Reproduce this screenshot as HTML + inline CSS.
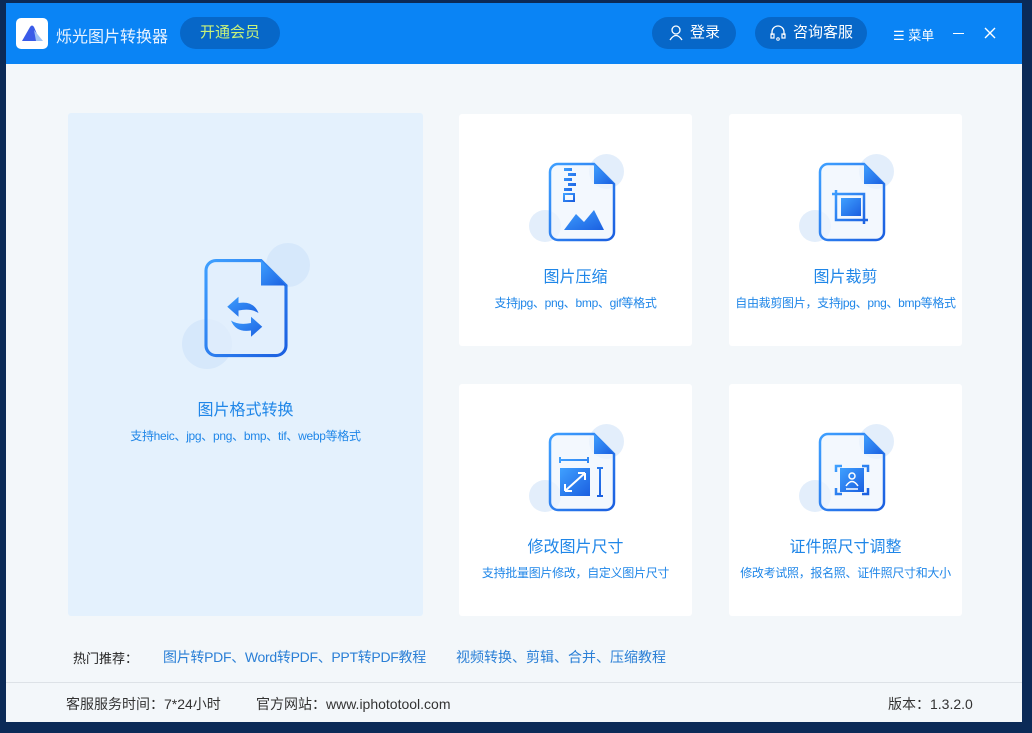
<!DOCTYPE html>
<html><head><meta charset="utf-8"><style>
*{margin:0;padding:0;box-sizing:border-box}
body{width:1032px;height:733px;overflow:hidden;background:#0b2a57;font-family:"Liberation Sans","Noto Sans CJK SC",sans-serif;position:relative}
.win{position:absolute;left:6px;top:3px;width:1016px;height:719px;background:#f3f7fa}
.bar{position:absolute;left:0;top:0;width:1016px;height:61px;background:#0a84f5}
.t{position:absolute;white-space:nowrap}
.pill{position:absolute;background-color:#0767c8;border-radius:16px;color:#fff;font-size:15px;height:32px;line-height:32px;display:flex;align-items:center;justify-content:center;gap:6px}
.card{position:absolute;background:#fff;border-radius:3px}
.card .ti{position:absolute;left:0;right:0;text-align:center;font-size:16px;color:#1f86e8}
.card .su{position:absolute;left:0;right:0;text-align:center;font-size:12px;color:#1f86e8;letter-spacing:-0.3px}
.circ{position:absolute;border-radius:50%;background:#e3eefb}
</style></head><body>
<div class="win">
<div class="bar">
 <div style="position:absolute;left:10px;top:15px;width:32px;height:31px;background:#fff;border-radius:5px">
  <svg width="32" height="31" viewBox="0 0 32 31"><path d="M6 23 L14 9 Q16 6 18 9 L24 23 Z" fill="#3a5be8"/><path d="M18 12 L27 23 H20 Z" fill="#9fc2f5"/></svg>
 </div>
 <div class="t" style="left:50px;top:20px;color:#eaf3ff;font-size:16px">烁光图片转换器</div>
 <div class="pill" style="left:174px;top:14px;width:100px;color:#c8f27a">开通会员</div>
 <div class="pill" style="left:646px;top:14px;width:84px">
  <svg width="16" height="16" viewBox="0 0 16 16"><circle cx="8" cy="5" r="4" fill="none" stroke="#fff" stroke-width="1.3"/><path d="M2 15 Q8 6 14 15" fill="none" stroke="#fff" stroke-width="1.3"/></svg>
  <span>登录</span></div>
 <div class="pill" style="left:749px;top:14px;width:112px">
  <svg width="18" height="18" viewBox="0 0 18 18"><path d="M3 11 V8 a6 6 0 0 1 12 0 V11" fill="none" stroke="#fff" stroke-width="1.3"/><rect x="2" y="10" width="3" height="4" fill="none" stroke="#fff" stroke-width="1.2"/><rect x="13" y="10" width="3" height="4" fill="none" stroke="#fff" stroke-width="1.2"/><circle cx="9" cy="15" r="1.3" fill="none" stroke="#fff"/></svg>
  <span>咨询客服</span></div>
 <div class="t" style="left:887px;top:22px;color:#fff;font-size:13px">☰ 菜单</div>
 <div style="position:absolute;left:947px;top:30px;width:11px;height:1px;background:#fff"></div>
 <svg width="12" height="12" style="position:absolute;left:978px;top:24px"><path d="M1 1 L11 11 M11 1 L1 11" stroke="#fff" stroke-width="1.4"/></svg>
</div>

<div class="card" style="left:62px;top:110px;width:355px;height:503px;background:#e4f1fd">
 <div class="circ" style="left:198px;top:130px;width:44px;height:44px;background:#d6e8fb"></div>
 <div class="circ" style="left:114px;top:206px;width:50px;height:50px;background:#d6e8fb"></div>
 <svg width="92" height="100" viewBox="0 0 68 80" style="position:absolute;left:132px;top:145px">
  <defs><linearGradient id="g" x1="0" y1="0" x2="1" y2="1"><stop offset="0" stop-color="#3fa0ff"/><stop offset="1" stop-color="#1b5fe0"/></linearGradient></defs>
  <path d="M10 2 H46 L66 22 V70 a8 8 0 0 1 -8 8 H10 a8 8 0 0 1 -8 -8 V10 a8 8 0 0 1 8 -8 Z" fill="#e1eefc" fill-opacity=".7" stroke="url(#g)" stroke-width="2.5"/>
  <path d="M46 2 V22 H66 Z" fill="url(#g)"/>
  <path d="M44 44 Q40 34 28 36 V31 L19 39 L28 47 V42 Q38 40 44 44Z" fill="url(#g)"/>
  <path d="M22 50 Q26 60 38 58 V63 L47 55 L38 47 V52 Q28 54 22 50Z" fill="url(#g)"/>
 </svg>
 <div class="ti" style="top:283px">图片格式转换</div>
 <div class="su" style="top:314px">支持heic、jpg、png、bmp、tif、webp等格式</div>
</div>

<div class="card" style="left:453px;top:111px;width:233px;height:232px">
 <div class="circ" style="left:130px;top:40px;width:35px;height:35px"></div>
 <div class="circ" style="left:70px;top:96px;width:32px;height:32px"></div>
 <svg width="68" height="80" viewBox="0 0 68 80" style="position:absolute;left:89px;top:48px">
  <defs><linearGradient id="g2" x1="0" y1="0" x2="1" y2="1"><stop offset="0" stop-color="#3fa0ff"/><stop offset="1" stop-color="#1b5fe0"/></linearGradient></defs>
  <path d="M10 2 H46 L66 22 V70 a8 8 0 0 1 -8 8 H10 a8 8 0 0 1 -8 -8 V10 a8 8 0 0 1 8 -8 Z" fill="#eef5fe" fill-opacity=".7" stroke="url(#g2)" stroke-width="2.5"/>
  <path d="M46 2 V22 H66 Z" fill="url(#g2)"/>
  <path d="M16 6h8v3h-8zM20 11h8v3h-8zM16 16h8v3h-8zM20 21h8v3h-8zM16 26h8v3h-8z" fill="url(#g2)"/>
  <rect x="16" y="32" width="10" height="7" fill="none" stroke="url(#g2)" stroke-width="2"/>
  <path d="M16 68 L28 52 L36 60 L46 48 L56 68 Z" fill="url(#g2)"/>
 </svg>
 <div class="ti" style="top:149px">图片压缩</div>
 <div class="su" style="top:180px">支持jpg、png、bmp、gif等格式</div>
</div>

<div class="card" style="left:723px;top:111px;width:233px;height:232px">
 <div class="circ" style="left:130px;top:40px;width:35px;height:35px"></div>
 <div class="circ" style="left:70px;top:96px;width:32px;height:32px"></div>
 <svg width="68" height="80" viewBox="0 0 68 80" style="position:absolute;left:89px;top:48px">
  <path d="M10 2 H46 L66 22 V70 a8 8 0 0 1 -8 8 H10 a8 8 0 0 1 -8 -8 V10 a8 8 0 0 1 8 -8 Z" fill="#eef5fe" fill-opacity=".7" stroke="url(#g2)" stroke-width="2.5"/>
  <path d="M46 2 V22 H66 Z" fill="url(#g2)"/>
  <path d="M18 28 V58 H50 M14 32 H46 V62" fill="none" stroke="url(#g2)" stroke-width="2.5"/>
  <rect x="23" y="36" width="20" height="18" fill="url(#g2)"/>
 </svg>
 <div class="ti" style="top:149px">图片裁剪</div>
 <div class="su" style="top:180px">自由裁剪图片，支持jpg、png、bmp等格式</div>
</div>

<div class="card" style="left:453px;top:381px;width:233px;height:232px">
 <div class="circ" style="left:130px;top:40px;width:35px;height:35px"></div>
 <div class="circ" style="left:70px;top:96px;width:32px;height:32px"></div>
 <svg width="68" height="80" viewBox="0 0 68 80" style="position:absolute;left:89px;top:48px">
  <path d="M10 2 H46 L66 22 V70 a8 8 0 0 1 -8 8 H10 a8 8 0 0 1 -8 -8 V10 a8 8 0 0 1 8 -8 Z" fill="#eef5fe" fill-opacity=".7" stroke="url(#g2)" stroke-width="2.5"/>
  <path d="M46 2 V22 H66 Z" fill="url(#g2)"/>
  <path d="M12 28 H40 M12 25 V31 M40 25 V31 M52 36 V64 M49 36 H55 M49 64 H55" fill="none" stroke="url(#g2)" stroke-width="2"/>
  <rect x="12" y="36" width="30" height="28" fill="url(#g2)"/>
  <path d="M17 59 L37 41 M17 59 V52 M17 59 H24 M37 41 H30 M37 41 V48" stroke="#fff" stroke-width="2" fill="none"/>
 </svg>
 <div class="ti" style="top:149px">修改图片尺寸</div>
 <div class="su" style="top:180px">支持批量图片修改，自定义图片尺寸</div>
</div>

<div class="card" style="left:723px;top:381px;width:233px;height:232px">
 <div class="circ" style="left:130px;top:40px;width:35px;height:35px"></div>
 <div class="circ" style="left:70px;top:96px;width:32px;height:32px"></div>
 <svg width="68" height="80" viewBox="0 0 68 80" style="position:absolute;left:89px;top:48px">
  <path d="M10 2 H46 L66 22 V70 a8 8 0 0 1 -8 8 H10 a8 8 0 0 1 -8 -8 V10 a8 8 0 0 1 8 -8 Z" fill="#eef5fe" fill-opacity=".7" stroke="url(#g2)" stroke-width="2.5"/>
  <path d="M46 2 V22 H66 Z" fill="url(#g2)"/>
  <path d="M18 40 V34 H24 M44 34 H50 V40 M50 56 V62 H44 M24 62 H18 V56" fill="none" stroke="url(#g2)" stroke-width="2.5"/>
  <rect x="22" y="36" width="24" height="24" fill="url(#g2)"/>
  <circle cx="34" cy="44" r="3" fill="none" stroke="#fff" stroke-width="1.5"/>
  <path d="M28 54 Q34 45 40 54 M28 57 H40" fill="none" stroke="#fff" stroke-width="1.5"/>
 </svg>
 <div class="ti" style="top:149px">证件照尺寸调整</div>
 <div class="su" style="top:180px">修改考试照，报名照、证件照尺寸和大小</div>
</div>

<div class="t" style="left:67px;top:645px;font-size:13px;color:#222">热门推荐：</div>
<div class="t" style="left:157px;top:644px;font-size:14px;color:#2a7fd6;letter-spacing:-0.3px">图片转PDF、Word转PDF、PPT转PDF教程</div>
<div class="t" style="left:450px;top:644px;font-size:14px;color:#2a7fd6">视频转换、剪辑、合并、压缩教程</div>
<div style="position:absolute;left:0;top:679px;width:1016px;height:1px;background:#dde2e7"></div>
<div class="t" style="left:60px;top:691px;font-size:14px;color:#333">客服服务时间：7*24小时</div>
<div class="t" style="left:250px;top:691px;font-size:14px;color:#333">官方网站：www.iphototool.com</div>
<div class="t" style="left:882px;top:691px;font-size:14px;color:#333">版本：1.3.2.0</div>
</div>
</body></html>
